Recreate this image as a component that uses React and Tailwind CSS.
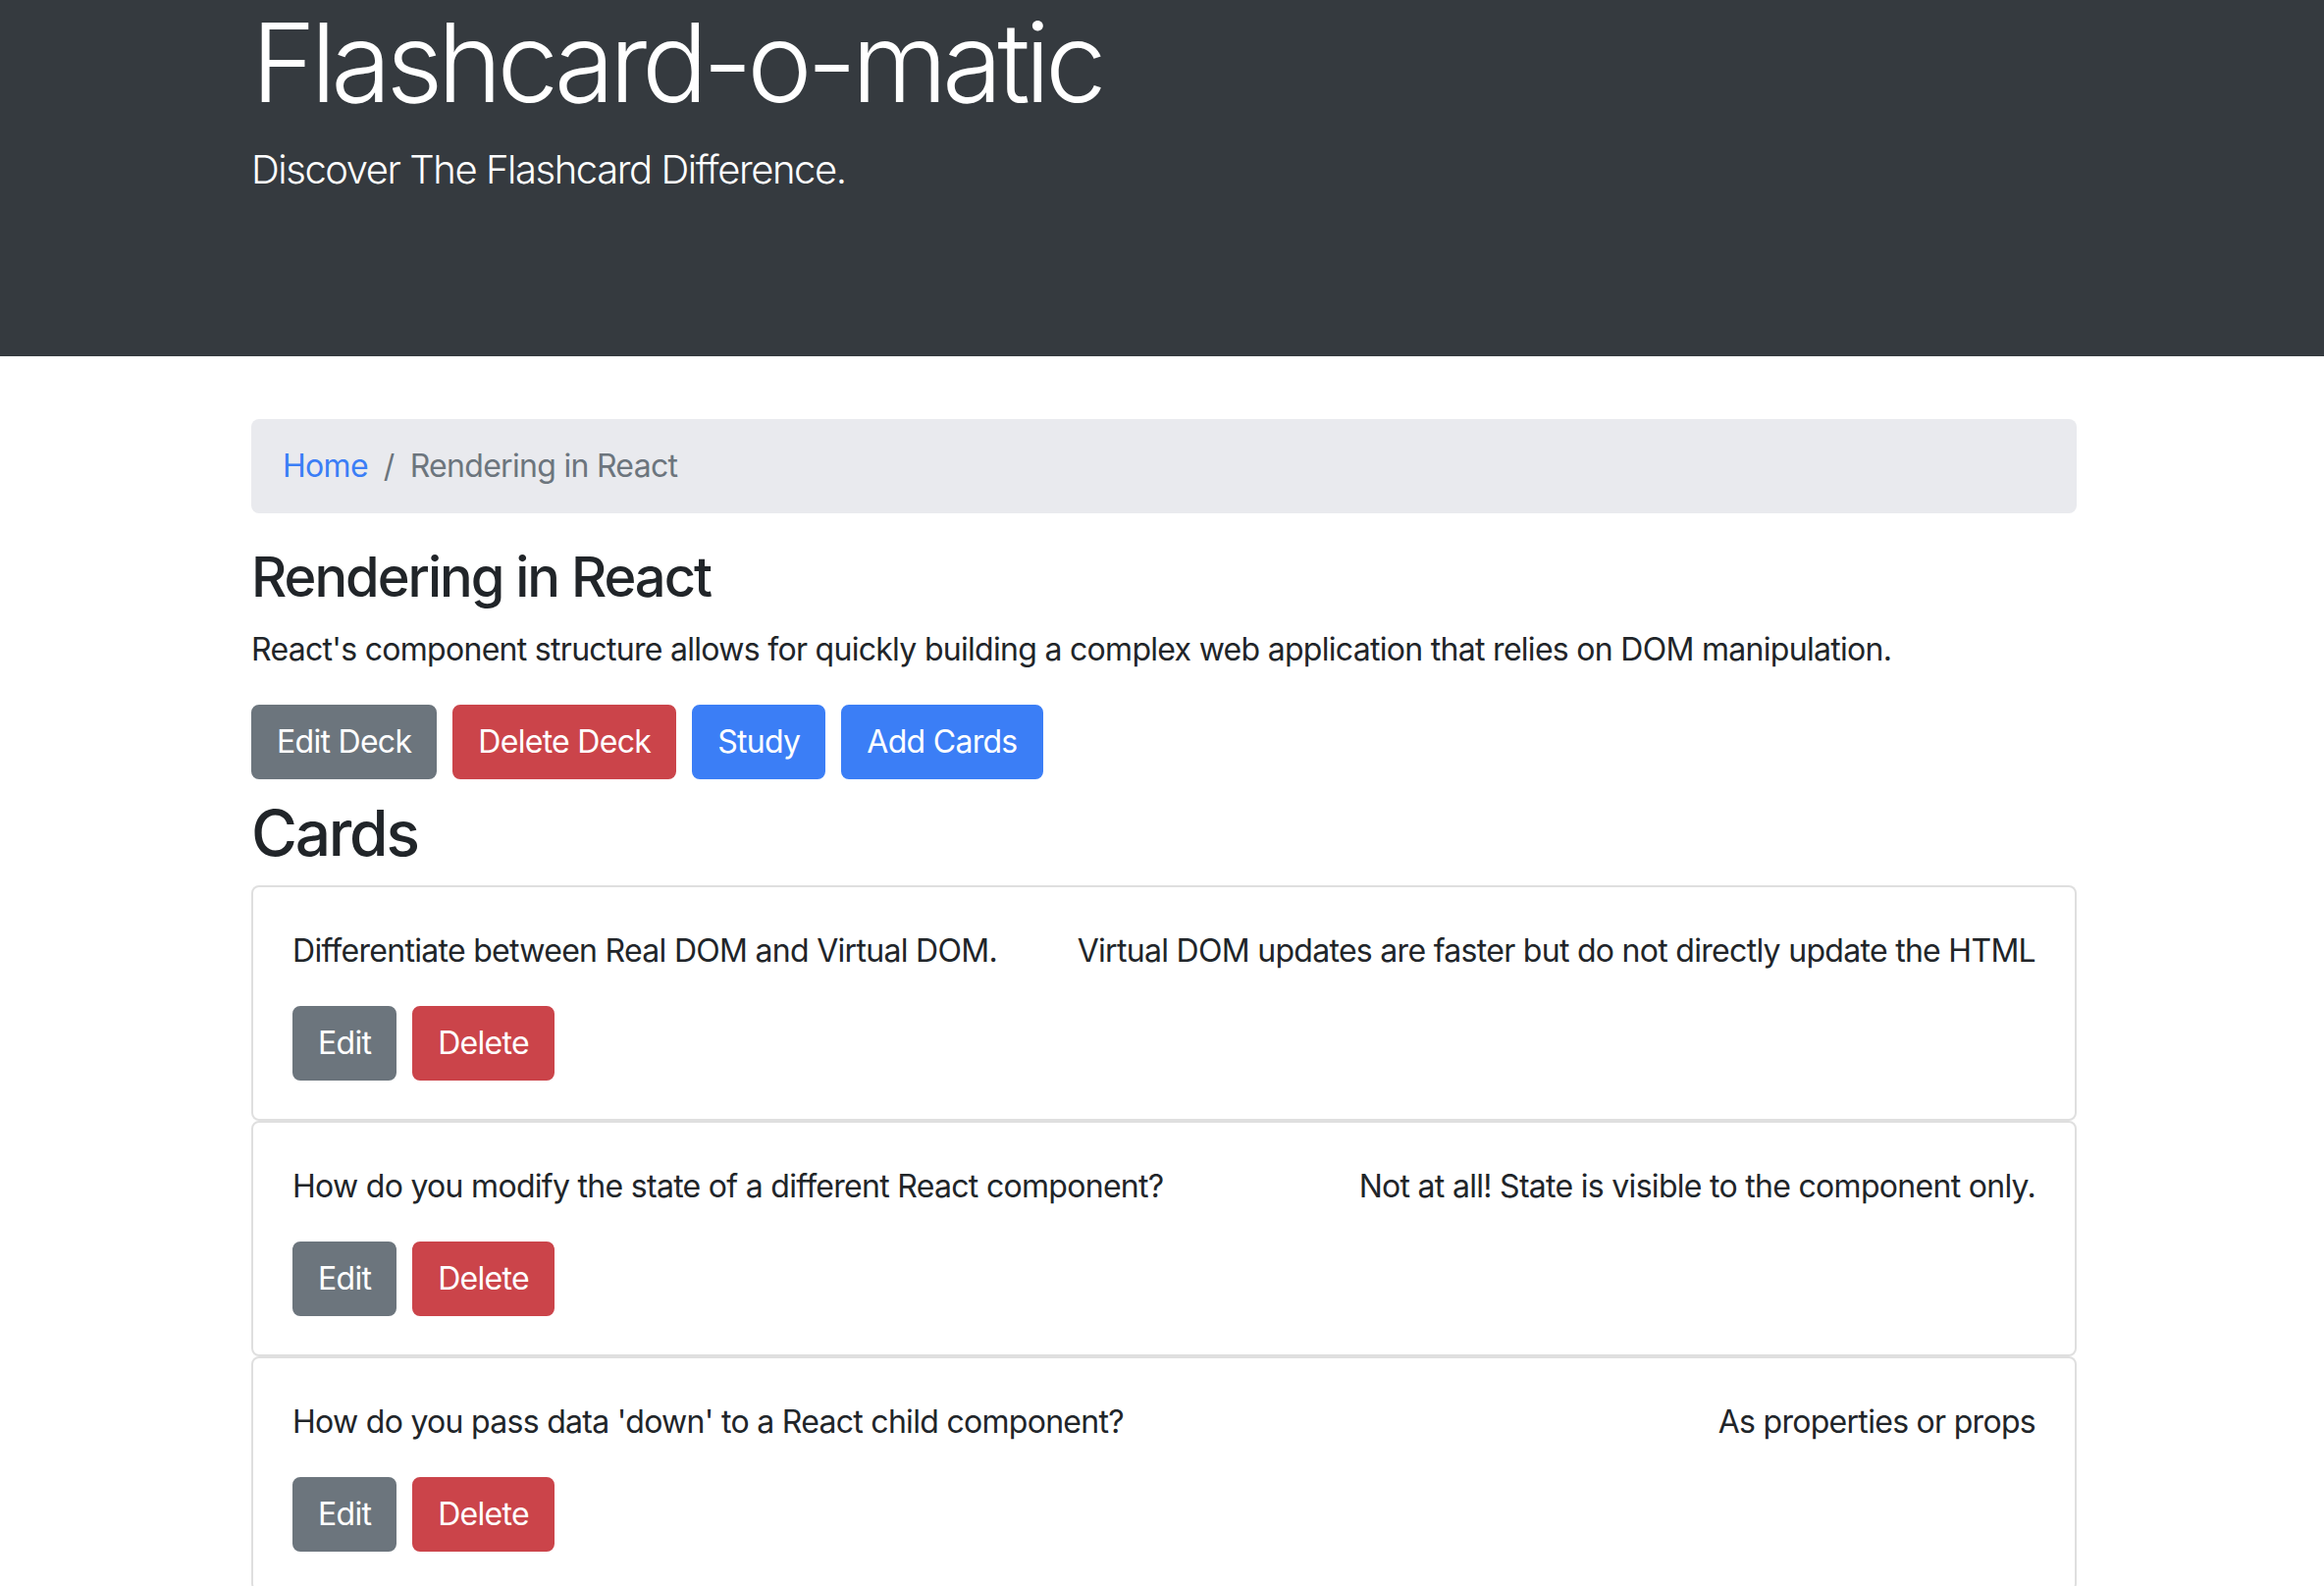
import React from 'react';

// Deck view: dark jumbotron, breadcrumb, deck info and its cards.

const deck = {
  name: 'Rendering in React',
  description:
    "React's component structure allows for quickly building a complex web application that relies on DOM manipulation.",
  cards: [
    {
      id: 1,
      front: 'Differentiate between Real DOM and Virtual DOM.',
      back: 'Virtual DOM updates are faster but do not directly update the HTML',
    },
    {
      id: 2,
      front: 'How do you modify the state of a different React component?',
      back: 'Not at all! State is visible to the component only.',
    },
    {
      id: 3,
      front: "How do you pass data 'down' to a React child component?",
      back: 'As properties or props',
    },
  ],
};

const btnBase =
  'h-[76px] px-[24px] mr-[16px] rounded-[8px] text-[32px] leading-[48px] text-white border-2';

const btnColors = {
  secondary: 'bg-[#6c757d] border-[#6c757d]',
  danger: 'bg-[#cb444a] border-[#cb444a]',
  primary: 'bg-[#3b7ef6] border-[#3b7ef6]',
};

const Button = ({ variant, children }) => (
  <button type="button" className={`${btnBase} ${btnColors[variant]}`}>
    {children}
  </button>
);

const Header = () => (
  <div className="bg-[#353a3f] h-[363px] text-white">
    <div className="w-[1860px] ml-[256px]">
      <h1 className="text-[112px] font-light leading-[126px] tracking-[-0.048em]">
        Flashcard-o-matic
      </h1>
      <p className="mt-[17px] text-[40px] font-light leading-[60px] tracking-[-0.036em]">
        Discover The Flashcard Difference.
      </p>
    </div>
  </div>
);

const CardItem = ({ card }) => (
  <div className="border-2 border-[#dfdfdf] rounded-[8px] px-[40px] pt-[41px] pb-[39px]">
    <div className="flex justify-between gap-[16px] mb-[32px]">
      <p className="leading-[48px]">{card.front}</p>
      <p className="leading-[48px] text-right">{card.back}</p>
    </div>
    <div className="flex">
      <Button variant="secondary">Edit</Button>
      <Button variant="danger">Delete</Button>
    </div>
  </div>
);

export default function App() {
  return (
    <div
      className="min-h-screen bg-white text-[#212529] text-[32px] tracking-[-0.022em]"
      style={{ fontFamily: 'Inter, "Liberation Sans", sans-serif' }}
    >
      <Header />

      <div className="w-[1860px] ml-[256px]">
        {/* Breadcrumb */}
        <nav className="mt-[64px] mb-[32px] bg-[#e9eaee] rounded-[8px] px-[32px] py-[24px] leading-[48px] flex">
          <span className="text-[#3b7ef6]">Home</span>
          <span className="px-[16px] text-[#6c757d]">/</span>
          <span className="text-[#6c757d]">{deck.name}</span>
        </nav>

        {/* Deck info */}
        <h3 className="text-[56px] font-medium leading-[67px] mb-[16px] tracking-[-0.036em]">
          {deck.name}
        </h3>
        <p className="leading-[48px] mb-[32px]">{deck.description}</p>
        <div className="flex mb-[16px]">
          <Button variant="secondary">Edit Deck</Button>
          <Button variant="danger">Delete Deck</Button>
          <Button variant="primary">Study</Button>
          <Button variant="primary">Add Cards</Button>
        </div>

        {/* Cards */}
        <h2 className="text-[64px] font-medium leading-[77px] mb-[15px] tracking-[-0.035em]">
          Cards
        </h2>
        <div className="flex flex-col">
          {deck.cards.map((card) => (
            <CardItem key={card.id} card={card} />
          ))}
        </div>
      </div>
    </div>
  );
}
